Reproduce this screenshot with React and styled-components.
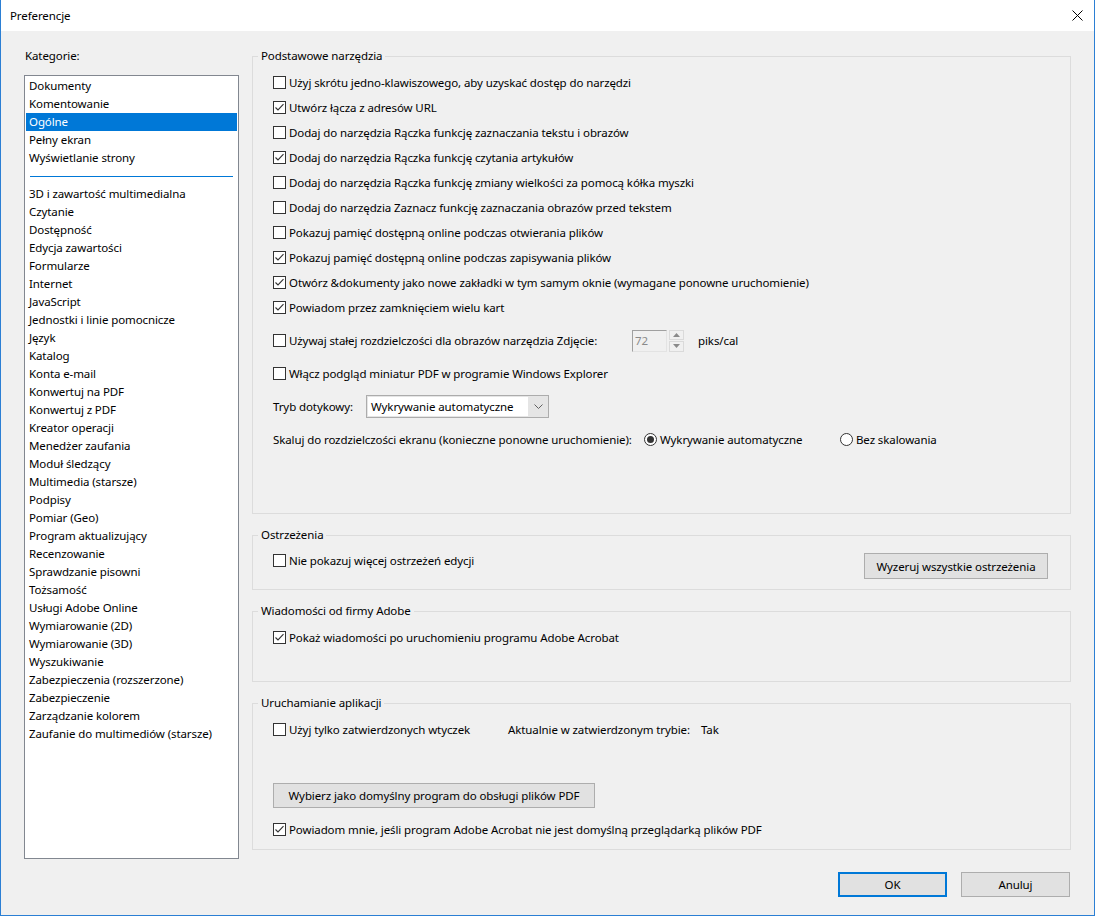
import React from 'react';
import styled, { createGlobalStyle } from 'styled-components';

const GlobalStyle = createGlobalStyle`
  html, body {
    margin: 0;
    padding: 0;
    background: #ffffff;
  }
  body {
    font-family: "Noto Sans", "Segoe UI", sans-serif;
    font-size: 11.5px;
    letter-spacing: -0.1px;
    color: #000;
  }
`;

const Window = styled.div`
  width: 1095px;
  height: 916px;
  box-sizing: border-box;
  border: 1px solid #2b7fd4;
  border-top: none;
  background: #f0f0f0;
  display: flex;
  flex-direction: column;
  box-shadow: 0 2px 3px rgba(0, 0, 0, 0.25);
`;

const TitleBar = styled.div`
  height: 31px;
  flex: none;
  background: #ffffff;
  display: flex;
  align-items: center;
  justify-content: space-between;
  padding: 0 10px 0 9px;
`;

const Title = styled.span`
  line-height: 16px;
`;

const CloseButton = styled.div`
  width: 12px;
  height: 12px;
  margin-right: 1px;
  display: flex;
  align-items: center;
  justify-content: center;
`;

const Body = styled.div`
  display: grid;
  grid-template-columns: 215px 819px;
  column-gap: 13px;
  padding: 17px 0 0 23px;
`;

const LeftColumn = styled.div`
  display: flex;
  flex-direction: column;
`;

const CategoryLabel = styled.div`
  line-height: 16px;
  margin-left: 1px;
`;

const List = styled.div`
  margin-top: 11px;
  height: 784px;
  box-sizing: border-box;
  border: 1px solid #828790;
  background: #ffffff;
  padding: 1px 1px;
  overflow: hidden;
`;

const ListItem = styled.div`
  height: 18px;
  line-height: 18px;
  padding-left: 3px;
  white-space: nowrap;
  background: ${p => (p.$selected ? '#0078d7' : 'transparent')};
  color: ${p => (p.$selected ? '#ffffff' : '#000000')};
`;

const ListSeparator = styled.div`
  height: 18px;
  display: flex;
  align-items: center;
  padding: 0 4px;
  &::after {
    content: '';
    flex: 1;
    height: 1px;
    background: #0078d7;
  }
`;

const RightColumn = styled.div`
  display: flex;
  flex-direction: column;
  gap: 13px;
`;

const Group = styled.fieldset`
  margin: 0;
  padding: 0;
  border: 1px solid #dcdcdc;
  min-width: 0;
`;

const Legend = styled.legend`
  margin-left: 5px;
  padding: 0 3px;
  line-height: 16px;
`;

const GroupContent = styled.div`
  padding: ${p => p.$pad};
  display: flex;
  flex-direction: column;
`;

const Row = styled.div`
  height: ${p => p.$h || 25}px;
  margin-top: ${p => p.$mt || 0}px;
  display: flex;
  align-items: ${p => (p.$top ? 'flex-start' : 'center')};
  white-space: nowrap;
`;

const CheckLabel = styled.label`
  display: flex;
  align-items: center;
  height: 25px;
  width: ${p => (p.$w ? `${p.$w}px` : 'auto')};
  flex: none;
`;

const Box = styled.span`
  width: 13px;
  height: 13px;
  box-sizing: border-box;
  border: 1px solid #333333;
  background: #ffffff;
  margin-right: 3px;
  flex: none;
  display: flex;
  align-items: center;
  justify-content: center;
`;

const Text = styled.span`
  line-height: 16px;
  width: ${p => (p.$w ? `${p.$w}px` : 'auto')};
  flex: none;
`;

const NumberInput = styled.div`
  width: 35px;
  height: 22px;
  box-sizing: border-box;
  border: 1px solid;
  border-color: #a0a0a0 #e3e3e3 #e3e3e3 #a0a0a0;
  background: #f0f0f0;
  color: #8a8a8a;
  padding-left: 2px;
  line-height: 19px;
  flex: none;
`;

const Spinner = styled.div`
  width: 15px;
  height: 22px;
  margin-left: 2px;
  margin-right: 14px;
  display: flex;
  flex-direction: column;
  gap: 1px;
  flex: none;
`;

const SpinHalf = styled.div`
  flex: 1;
  box-sizing: border-box;
  border: 1px solid #dadada;
  background: #f0f0f0;
  display: flex;
  align-items: center;
  justify-content: center;
`;

const Select = styled.div`
  width: 183px;
  height: 23px;
  box-sizing: border-box;
  border: 1px solid #acacac;
  background: #e5e5e5;
  display: flex;
  align-items: stretch;
  flex: none;
`;

const SelectValue = styled.div`
  flex: 1;
  margin: 1px 0 1px 1px;
  background: #ffffff;
  padding-left: 3px;
  line-height: 19px;
`;

const SelectArrow = styled.div`
  width: 20px;
  display: flex;
  align-items: center;
  justify-content: center;
`;

const RadioOption = styled.label`
  display: flex;
  align-items: center;
  width: ${p => (p.$w ? `${p.$w}px` : 'auto')};
  flex: none;
`;

const RadioCircle = styled.span`
  width: 13px;
  height: 13px;
  box-sizing: border-box;
  border: 1px solid #333333;
  border-radius: 50%;
  background: #ffffff;
  margin-right: 3px;
  display: flex;
  align-items: center;
  justify-content: center;
  flex: none;
  &::after {
    content: '';
    width: 7px;
    height: 7px;
    border-radius: 50%;
    background: ${p => (p.$on ? '#333333' : 'transparent')};
  }
`;

const Button = styled.button`
  font-family: inherit;
  font-size: inherit;
  letter-spacing: inherit;
  color: #000;
  height: ${p => p.$h || 25}px;
  width: ${p => (p.$w ? `${p.$w}px` : 'auto')};
  margin-top: ${p => p.$mt || 0}px;
  margin-left: ${p => (p.$push ? 'auto' : '0')};
  box-sizing: border-box;
  background: #e1e1e1;
  border: ${p => (p.$default ? '2px solid #0078d7' : '1px solid #adadad')};
  padding: 0;
  flex: none;
  cursor: default;
`;

const Footer = styled.div`
  display: flex;
  justify-content: flex-end;
  gap: 14px;
  margin-top: 13px;
  padding-right: 24px;
`;

const Check = ({ checked }) => (
  <Box>
    {checked && (
      <svg width="11" height="11" viewBox="0 0 11 11">
        <polyline points="1.5,5.5 4,8 9.5,2.2" fill="none" stroke="#333" strokeWidth="1.1" />
      </svg>
    )}
  </Box>
);

const CheckRow = ({ checked, children, mt }) => (
  <Row $mt={mt}>
    <CheckLabel>
      <Check checked={checked} />
      <Text>{children}</Text>
    </CheckLabel>
  </Row>
);

const topCategories = ['Dokumenty', 'Komentowanie', 'Ogólne', 'Pełny ekran', 'Wyświetlanie strony'];

const otherCategories = [
  '3D i zawartość multimedialna',
  'Czytanie',
  'Dostępność',
  'Edycja zawartości',
  'Formularze',
  'Internet',
  'JavaScript',
  'Jednostki i linie pomocnicze',
  'Język',
  'Katalog',
  'Konta e-mail',
  'Konwertuj na PDF',
  'Konwertuj z PDF',
  'Kreator operacji',
  'Menedżer zaufania',
  'Moduł śledzący',
  'Multimedia (starsze)',
  'Podpisy',
  'Pomiar (Geo)',
  'Program aktualizujący',
  'Recenzowanie',
  'Sprawdzanie pisowni',
  'Tożsamość',
  'Usługi Adobe Online',
  'Wymiarowanie (2D)',
  'Wymiarowanie (3D)',
  'Wyszukiwanie',
  'Zabezpieczenia (rozszerzone)',
  'Zabezpieczenie',
  'Zarządzanie kolorem',
  'Zaufanie do multimediów (starsze)',
];

const basicOptions = [
  ['Użyj skrótu jedno-klawiszowego, aby uzyskać dostęp do narzędzi', false],
  ['Utwórz łącza z adresów URL', true],
  ['Dodaj do narzędzia Rączka funkcję zaznaczania tekstu i obrazów', false],
  ['Dodaj do narzędzia Rączka funkcję czytania artykułów', true],
  ['Dodaj do narzędzia Rączka funkcję zmiany wielkości za pomocą kółka myszki', false],
  ['Dodaj do narzędzia Zaznacz funkcję zaznaczania obrazów przed tekstem', false],
  ['Pokazuj pamięć dostępną online podczas otwierania plików', false],
  ['Pokazuj pamięć dostępną online podczas zapisywania plików', true],
  ['Otwórz &dokumenty jako nowe zakładki w tym samym oknie (wymagane ponowne uruchomienie)', true],
  ['Powiadom przez zamknięciem wielu kart', true],
];

export default function App() {
  return (
    <>
      <GlobalStyle />
      <Window>
        <TitleBar>
          <Title>Preferencje</Title>
          <CloseButton>
            <svg width="11" height="11" viewBox="0 0 11 11">
              <path d="M0.5 0.5 L10.5 10.5 M10.5 0.5 L0.5 10.5" stroke="#000" strokeWidth="1" />
            </svg>
          </CloseButton>
        </TitleBar>

        <Body>
          <LeftColumn>
            <CategoryLabel>Kategorie:</CategoryLabel>
            <List>
              {topCategories.map(c => (
                <ListItem key={c} $selected={c === 'Ogólne'}>{c}</ListItem>
              ))}
              <ListSeparator />
              {otherCategories.map(c => (
                <ListItem key={c}>{c}</ListItem>
              ))}
            </List>
          </LeftColumn>

          <RightColumn>
            <Group>
              <Legend>Podstawowe narzędzia</Legend>
              <GroupContent $pad="6px 20px 61px 20px">
                {basicOptions.map(([label, on]) => (
                  <CheckRow key={label} checked={on}>{label}</CheckRow>
                ))}
                <Row $mt={8}>
                  <CheckLabel $w={359}>
                    <Check />
                    <Text>Używaj stałej rozdzielczości dla obrazów narzędzia Zdjęcie:</Text>
                  </CheckLabel>
                  <NumberInput>72</NumberInput>
                  <Spinner>
                    <SpinHalf>
                      <svg width="7" height="4" viewBox="0 0 7 4"><polygon points="0,4 7,4 3.5,0" fill="#8a8a8a" /></svg>
                    </SpinHalf>
                    <SpinHalf>
                      <svg width="7" height="4" viewBox="0 0 7 4"><polygon points="0,0 7,0 3.5,4" fill="#8a8a8a" /></svg>
                    </SpinHalf>
                  </Spinner>
                  <Text>piks/cal</Text>
                </Row>
                <CheckRow mt={8}>Włącz podgląd miniatur PDF w programie Windows Explorer</CheckRow>
                <Row $mt={8}>
                  <Text $w={93}>Tryb dotykowy:</Text>
                  <Select>
                    <SelectValue>Wykrywanie automatyczne</SelectValue>
                    <SelectArrow>
                      <svg width="9" height="5" viewBox="0 0 9 5">
                        <polyline points="0.5,0.5 4.5,4.5 8.5,0.5" fill="none" stroke="#606060" strokeWidth="1" />
                      </svg>
                    </SelectArrow>
                  </Select>
                </Row>
                <Row $mt={8}>
                  <Text $w={371}>Skaluj do rozdzielczości ekranu (konieczne ponowne uruchomienie):</Text>
                  <RadioOption $w={196}>
                    <RadioCircle $on />
                    <Text>Wykrywanie automatyczne</Text>
                  </RadioOption>
                  <RadioOption>
                    <RadioCircle />
                    <Text>Bez skalowania</Text>
                  </RadioOption>
                </Row>
              </GroupContent>
            </Group>

            <Group>
              <Legend>Ostrzeżenia</Legend>
              <GroupContent $pad="5px 22px 10px 20px">
                <Row $h={31} $top>
                  <CheckLabel>
                    <Check />
                    <Text>Nie pokazuj więcej ostrzeżeń edycji</Text>
                  </CheckLabel>
                  <Button $w={184} $h={26} $mt={5} $push>Wyzeruj wszystkie ostrzeżenia</Button>
                </Row>
              </GroupContent>
            </Group>

            <Group>
              <Legend>Wiadomości od firmy Adobe</Legend>
              <GroupContent $pad="6px 20px 31px 20px">
                <CheckRow checked>Pokaż wiadomości po uruchomieniu programu Adobe Acrobat</CheckRow>
              </GroupContent>
            </Group>

            <Group>
              <Legend>Uruchamianie aplikacji</Legend>
              <GroupContent $pad="6px 20px 7px 20px">
                <Row>
                  <CheckLabel $w={235}>
                    <Check />
                    <Text>Użyj tylko zatwierdzonych wtyczek</Text>
                  </CheckLabel>
                  <Text $w={193}>Aktualnie w zatwierdzonym trybie:</Text>
                  <Text>Tak</Text>
                </Row>
                <Row $h={25} $mt={41}>
                  <Button $w={322}>Wybierz jako domyślny program do obsługi plików PDF</Button>
                </Row>
                <CheckRow checked mt={9}>Powiadom mnie, jeśli program Adobe Acrobat nie jest domyślną przeglądarką plików PDF</CheckRow>
              </GroupContent>
            </Group>
          </RightColumn>
        </Body>

        <Footer>
          <Button $w={109} $default>OK</Button>
          <Button $w={109}>Anuluj</Button>
        </Footer>
      </Window>
    </>
  );
}
